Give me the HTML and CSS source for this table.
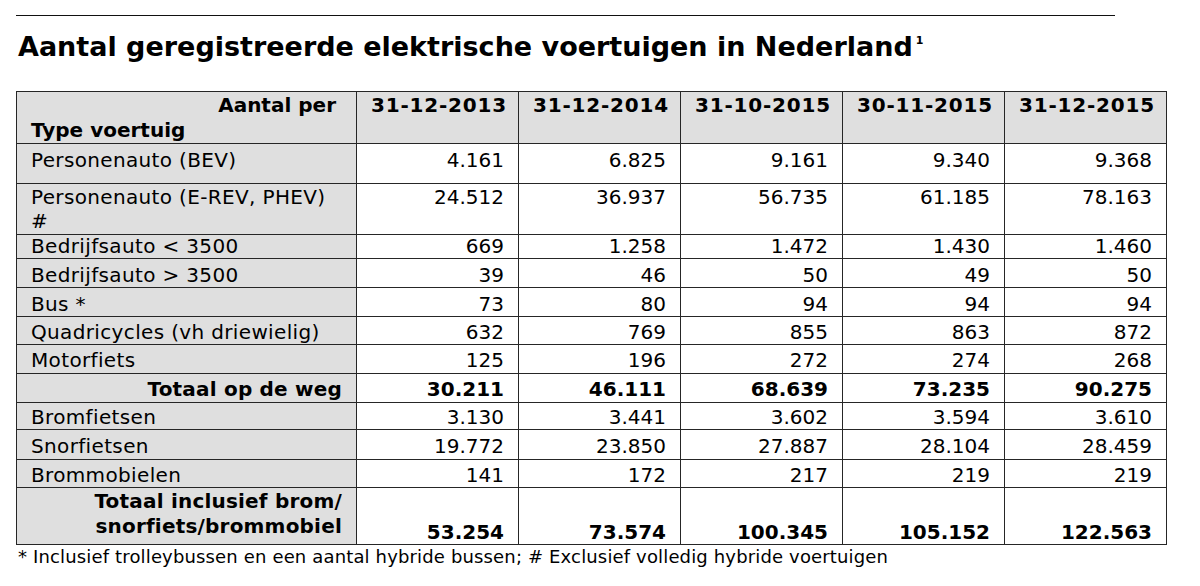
FILE: index.html
```html
<!DOCTYPE html>
<html lang="nl">
<head>
<meta charset="utf-8">
<title>Aantal geregistreerde elektrische voertuigen in Nederland</title>
<link rel="stylesheet" href="styles.css">
</head>
<body>
<div class="page">
  <hr class="rule">
  <h1 class="title">Aantal geregistreerde elektrische voertuigen in Nederland<sup class="note">1</sup></h1>
  <table class="tbl">
    <colgroup>
      <col class="c-label">
      <col class="c-num"><col class="c-num"><col class="c-num"><col class="c-num"><col class="c-num">
    </colgroup>
    <thead>
      <tr class="r-head">
        <th class="lbl"><div class="hl1">Aantal per</div><div class="hl2">Type voertuig</div></th>
        <th class="date">31-12-2013</th><th class="date">31-12-2014</th><th class="date">31-10-2015</th><th class="date">30-11-2015</th><th class="date">31-12-2015</th>
      </tr>
    </thead>
    <tbody>
      <tr class="r-bev"><td class="lbl">Personenauto (BEV)</td><td>4.161</td><td>6.825</td><td>9.161</td><td>9.340</td><td>9.368</td></tr>
      <tr class="r-phev"><td class="lbl">Personenauto (E-REV, PHEV)<br>#</td><td>24.512</td><td>36.937</td><td>56.735</td><td>61.185</td><td>78.163</td></tr>
      <tr class="r-b1"><td class="lbl">Bedrijfsauto &lt; 3500</td><td>669</td><td>1.258</td><td>1.472</td><td>1.430</td><td>1.460</td></tr>
      <tr class="r-b2"><td class="lbl">Bedrijfsauto &gt; 3500</td><td>39</td><td>46</td><td>50</td><td>49</td><td>50</td></tr>
      <tr class="r-bus"><td class="lbl">Bus *</td><td>73</td><td>80</td><td>94</td><td>94</td><td>94</td></tr>
      <tr class="r-quad"><td class="lbl">Quadricycles (vh driewielig)</td><td>632</td><td>769</td><td>855</td><td>863</td><td>872</td></tr>
      <tr class="r-motor"><td class="lbl">Motorfiets</td><td>125</td><td>196</td><td>272</td><td>274</td><td>268</td></tr>
      <tr class="r-tot total"><td class="lbl">Totaal op de weg</td><td>30.211</td><td>46.111</td><td>68.639</td><td>73.235</td><td>90.275</td></tr>
      <tr class="r-bromf"><td class="lbl">Bromfietsen</td><td>3.130</td><td>3.441</td><td>3.602</td><td>3.594</td><td>3.610</td></tr>
      <tr class="r-snorf"><td class="lbl">Snorfietsen</td><td>19.772</td><td>23.850</td><td>27.887</td><td>28.104</td><td>28.459</td></tr>
      <tr class="r-mob"><td class="lbl">Brommobielen</td><td>141</td><td>172</td><td>217</td><td>219</td><td>219</td></tr>
      <tr class="r-last total"><td class="lbl">Totaal inclusief brom/<br>snorfiets/brommobiel</td><td>53.254</td><td>73.574</td><td>100.345</td><td>105.152</td><td>122.563</td></tr>
    </tbody>
  </table>
  <p class="foot">* Inclusief trolleybussen en een aantal hybride bussen; # Exclusief volledig hybride voertuigen</p>
</div>
</body>
</html>
```

FILE: styles.css
```css
html, body {
  margin: 0;
  padding: 0;
  background: #fff;
}

body {
  font-family: "DejaVu Sans", Verdana, sans-serif;
  color: #000;
}

.page {
  padding-left: 16px;
}

.rule {
  margin: 15px 0 0 0;
  width: 1099px;
  height: 0;
  border: 0;
  border-top: 1px solid #111;
}

.title {
  margin: 14px 0 27px 2px;
  font-size: 27px;
  line-height: 34px;
  font-weight: bold;
}

.note {
  font-size: 11px;
  line-height: 0;
  vertical-align: 0;
  position: relative;
  top: -12px;
  margin-left: 3px;
}

.tbl {
  border-collapse: collapse;
  table-layout: fixed;
  width: 1149px;
}

.c-label { width: 340px; }
.c-num { width: 162px; }

.tbl th,
.tbl td {
  border: 1px solid #262626;
  padding: 4px 14px 0 14px;
  font-size: 20px;
  line-height: 24px;
  vertical-align: top;
  text-align: right;
  white-space: nowrap;
  box-sizing: border-box;
}

.tbl th {
  font-weight: bold;
  background: #dfdfdf;
}

.tbl th.date {
  letter-spacing: 0.8px;
  padding-right: 13px;
}

.tbl td.lbl {
  text-align: left;
  background: #dfdfdf;
  letter-spacing: 0.35px;
}

.hl1 {
  text-align: right;
  line-height: 25px;
  margin-right: 6px;
}

.hl2 {
  text-align: left;
  line-height: 25px;
}

.r-head { height: 50px; }
.r-head th { padding-top: 1px; }

.r-bev { height: 40px; }
.r-bev td { padding-top: 4px; }

.r-phev { height: 51px; }
.r-phev td { padding-top: 1px; }

.r-b1 { height: 24px; }
.r-b1 td { padding-top: 0; line-height: 22px; }

.r-b2 { height: 29px; }
.r-b2 td { padding-top: 4px; }

.r-bus { height: 29px; }
.r-bus td { padding-top: 4px; }

.r-quad { height: 28px; }
.r-quad td { padding-top: 3px; }

.r-motor { height: 29px; }
.r-motor td { padding-top: 3px; }

.r-tot { height: 29px; }
.r-tot td { padding-top: 3px; }

.r-bromf { height: 27px; }
.r-bromf td { padding-top: 2px; }

.r-snorf { height: 30px; }
.r-snorf td { padding-top: 4px; }

.r-mob { height: 28px; }
.r-mob td { padding-top: 3px; }

.r-last { height: 57px; }
.r-last td {
  vertical-align: bottom;
  padding-top: 0;
  padding-bottom: 0;
}
.tbl .r-last td.lbl {
  vertical-align: top;
  padding-top: 1px;
  line-height: 25px;
  letter-spacing: 0.2px;
}

.total td {
  font-weight: bold;
}

.tbl .total td.lbl {
  text-align: right;
  letter-spacing: 0.2px;
}

.foot {
  margin: 0 0 0 2px;
  font-size: 18px;
  line-height: 24px;
  letter-spacing: 0.15px;
}
```
